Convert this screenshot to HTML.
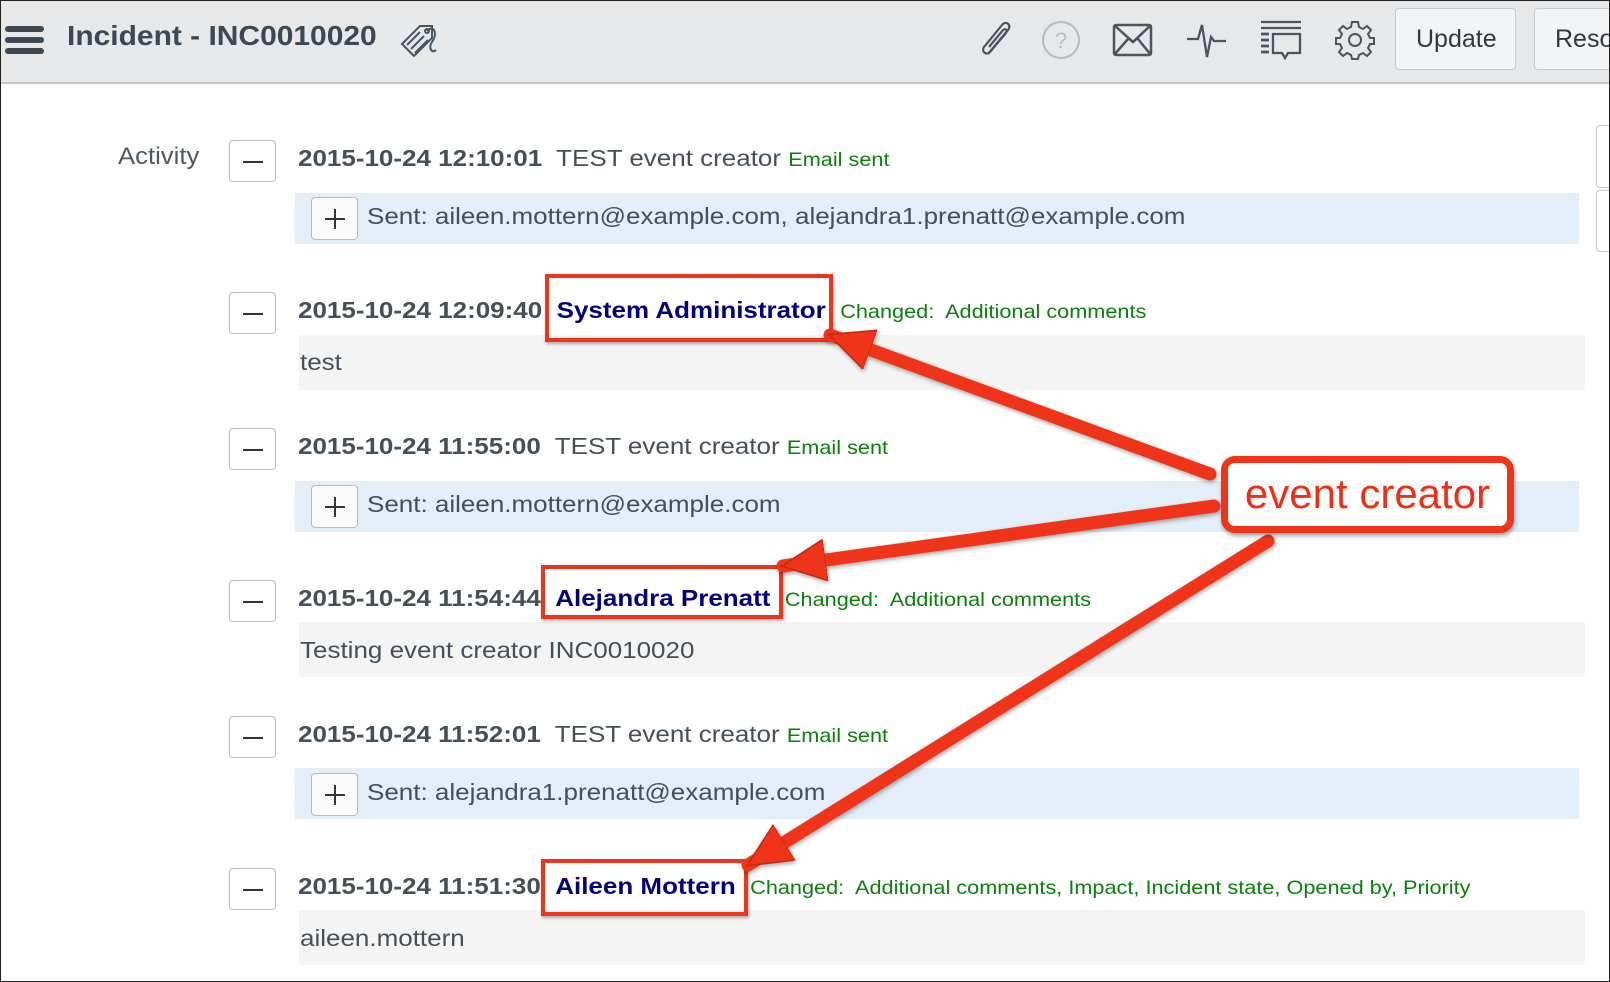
<!DOCTYPE html>
<html><head><meta charset="utf-8"><style>
*{margin:0;padding:0;box-sizing:border-box}
body{width:1610px;height:982px;position:relative;overflow:hidden;background:#fff;font-family:"Liberation Sans",Arial,sans-serif;color:#444f5a}
.frame{position:absolute;left:0;top:0;width:1610px;height:982px;border:1px solid #222;z-index:20;pointer-events:none}
.hdr{position:absolute;left:0;top:0;width:1610px;height:84px;background:#e6e8ea;border-bottom:2px solid #c4c7ca}
.title{position:absolute;left:67px;top:20px;font-size:28px;font-weight:bold;color:#3d4852;transform:scaleX(1.07);transform-origin:0 0}
.btn{position:absolute;top:8px;height:62px;background:#f3f4f5;border:1px solid #c6c9cc;border-radius:4px;font-size:25px;color:#2f3840;line-height:60px;padding-left:20px}
.abs{position:absolute}
.lbl{left:118px;top:143px;font-size:24px;color:#4f5963;transform:scaleX(1.07);transform-origin:0 0}
.mbtn{position:absolute;left:229px;width:47px;height:42px;border:1px solid #b8bcc0;border-radius:4px;background:#fff}
.mbtn:after{content:"";position:absolute;left:13px;top:20px;width:20px;height:2px;background:#333}
.pbtn{position:absolute;left:311px;width:47px;height:43px;border:1px solid #b8bcc0;border-radius:4px;background:#fbfbfb}
.pbtn:before{content:"";position:absolute;left:13px;top:20px;width:20px;height:2px;background:#333}
.pbtn:after{content:"";position:absolute;left:22px;top:11px;width:2px;height:20px;background:#333}
.row{position:absolute;left:298px;font-size:23px;white-space:nowrap;color:#444f5a;transform:scaleX(1.13);transform-origin:0 0}
.row b{color:#444f5a}
.g{color:#0a800a;font-size:19.2px}
.n{color:#00007a;font-weight:bold}
.blue{position:absolute;left:295px;width:1284px;height:51px;background:#e4eef9}
.grey{position:absolute;left:299px;width:1286px;height:55px;background:#f4f4f4}
.txt{position:absolute;font-size:23px;color:#444f5a;white-space:nowrap;transform:scaleX(1.13);transform-origin:0 0}
.rbox{position:absolute;border:4px solid #f0341a;box-shadow:1px 2px 3px rgba(0,0,0,.3)}
</style></head><body>
<div class="hdr">
  <div class="abs" style="left:5px;top:26px;width:39px;height:6px;background:#3d4852;border-radius:3px"></div>
  <div class="abs" style="left:5px;top:37px;width:39px;height:6px;background:#3d4852;border-radius:3px"></div>
  <div class="abs" style="left:5px;top:48px;width:39px;height:6px;background:#3d4852;border-radius:3px"></div>
  <div class="title">Incident - INC0010020</div>
  <svg class="abs" style="left:398px;top:20px" width="42" height="42" viewBox="0 0 42 42" fill="none" stroke="#4a555f" stroke-width="2"><path d="M4 24 L22 6 L34 6 L34 18 L16 36 Z"/><path d="M9 25 L22 12 M13 29 L26 16 M17 33 L30 20"/><circle cx="29" cy="11" r="2"/><path d="M29 11 C36 4 40 14 34 22 C30 28 34 34 38 30"/></svg>
  <svg class="abs" style="left:978px;top:20px" width="40" height="40" viewBox="0 0 40 40" fill="none" stroke="#4a555f" stroke-width="2.2"><path d="M10 34 L30 10 C34 5 28 0 24 5 L6 27 C3 31 8 36 12 32 L28 13 C30 10 27 8 25 10 L11 27"/></svg>
  <svg class="abs" style="left:1040px;top:19px" width="42" height="42" viewBox="0 0 42 42" fill="none" stroke="#b9bdc1" stroke-width="2.2"><circle cx="21" cy="21" r="18"/><text x="21" y="29" font-size="22" text-anchor="middle" fill="#b9bdc1" stroke="none" font-family="Liberation Sans">?</text></svg>
  <svg class="abs" style="left:1112px;top:22px" width="42" height="36" viewBox="0 0 42 36" fill="none" stroke="#4a555f" stroke-width="2.5"><rect x="2" y="3" width="37" height="30" rx="2"/><path d="M2 3 L21 20 L39 3 M2 33 L16 17 M39 33 L26 17"/></svg>
  <svg class="abs" style="left:1186px;top:17px" width="42" height="46" viewBox="0 0 42 46" fill="none" stroke="#4a555f" stroke-width="2.3"><path d="M1 22 L12 22 L16 8 L21 40 L25 20 L28 24 L40 24"/></svg>
  <svg class="abs" style="left:1260px;top:19px" width="42" height="42" viewBox="0 0 42 42" fill="none" stroke="#4a555f" stroke-width="2.3"><path d="M1 3 H41 M1 9 H41"/><path d="M1 15 H9 M1 21 H9 M1 27 H9 M1 33 H9" stroke-width="2.8"/><path d="M13 15 H40 V34 H28 L25 39 L22 34 H13 Z"/></svg>
  <svg class="abs" style="left:1334px;top:19px" width="42" height="42" viewBox="0 0 42 42" fill="none" stroke="#4a555f" stroke-width="2"><circle cx="21" cy="21" r="6"/><path d="M18 3 H24 L25 8 L29 10 L33 7 L37 11 L34 15 L36 19 L40 19 V25 L36 25 L34 29 L37 33 L33 37 L29 34 L25 36 L24 40 H18 L17 36 L13 34 L9 37 L5 33 L8 29 L6 25 L2 25 V19 L6 19 L8 15 L5 11 L9 7 L13 10 L17 8 Z"/></svg>
  <div class="btn" style="left:1395px;width:121px">Update</div>
  <div class="btn" style="left:1534px;width:100px">Resolve</div>
</div>

<div class="abs" style="left:1596px;top:125px;width:20px;height:63px;border:1px solid #c6c9cc;border-radius:4px"></div>
<div class="abs" style="left:1596px;top:190px;width:20px;height:62px;border:1px solid #c6c9cc;border-radius:4px"></div>

<div class="abs lbl">Activity</div>

<div class="mbtn" style="top:140px"></div>
<div class="row" style="top:145px"><b>2015-10-24 12:10:01</b>&nbsp; TEST event creator <span class="g">Email sent</span></div>
<div class="blue" style="top:193px"></div>
<div class="pbtn" style="top:197px"></div>
<div class="txt" style="left:367px;top:203px">Sent: aileen.mottern@example.com, alejandra1.prenatt@example.com</div>

<div class="mbtn" style="top:292px"></div>
<div class="row" style="top:297px"><b>2015-10-24 12:09:40</b>&nbsp; <span class="n">System Administrator</span>&nbsp; <span class="g">Changed:&nbsp; Additional comments</span></div>
<div class="grey" style="top:335px"></div>
<div class="txt" style="left:300px;top:349px">test</div>

<div class="mbtn" style="top:428px"></div>
<div class="row" style="top:433px"><b>2015-10-24 11:55:00</b>&nbsp; TEST event creator <span class="g">Email sent</span></div>
<div class="blue" style="top:481px"></div>
<div class="pbtn" style="top:485px"></div>
<div class="txt" style="left:367px;top:491px">Sent: aileen.mottern@example.com</div>

<div class="mbtn" style="top:580px"></div>
<div class="row" style="top:585px"><b>2015-10-24 11:54:44</b>&nbsp; <span class="n">Alejandra Prenatt</span>&nbsp; <span class="g">Changed:&nbsp; Additional comments</span></div>
<div class="grey" style="top:622px"></div>
<div class="txt" style="left:300px;top:637px">Testing event creator INC0010020</div>

<div class="mbtn" style="top:716px"></div>
<div class="row" style="top:721px"><b>2015-10-24 11:52:01</b>&nbsp; TEST event creator <span class="g">Email sent</span></div>
<div class="blue" style="top:768px"></div>
<div class="pbtn" style="top:773px"></div>
<div class="txt" style="left:367px;top:779px">Sent: alejandra1.prenatt@example.com</div>

<div class="mbtn" style="top:868px"></div>
<div class="row" style="top:873px"><b>2015-10-24 11:51:30</b>&nbsp; <span class="n">Aileen Mottern</span>&nbsp; <span class="g">Changed:&nbsp; Additional comments, Impact, Incident state, Opened by, Priority</span></div>
<div class="grey" style="top:910px"></div>
<div class="txt" style="left:300px;top:925px">aileen.mottern</div>

<div class="rbox" style="left:545px;top:274px;width:288px;height:68px"></div>
<div class="rbox" style="left:541px;top:565px;width:242px;height:54px"></div>
<div class="rbox" style="left:541px;top:859px;width:207px;height:57px"></div>

<svg class="abs" style="left:0;top:0;z-index:5" width="1610" height="982">
<defs><marker id="ah" markerWidth="4" markerHeight="4" refX="3.3" refY="1.6" orient="auto" markerUnits="strokeWidth"><path d="M0 0 L3.4 1.6 L0 3.2 Z" fill="#f0341a" stroke="#c42a10" stroke-width="0.12"/></marker></defs>
<g stroke="#f0341a" stroke-width="13" stroke-linecap="round" fill="none" style="filter:drop-shadow(1px 2px 2px rgba(0,0,0,.35))">
<line x1="1210" y1="474" x2="830" y2="335" marker-end="url(#ah)"/>
<line x1="1214" y1="506" x2="783" y2="566" marker-end="url(#ah)"/>
<line x1="1268" y1="541" x2="748" y2="865" marker-end="url(#ah)"/>
</g>
</svg>
<div class="abs" style="left:1221px;top:456px;width:293px;height:77px;border:7px solid #f0341a;border-radius:14px;background:#fff;z-index:6;box-shadow:1px 3px 4px rgba(0,0,0,.35);font-size:42px;color:#ee2f14;text-align:center;line-height:62px;white-space:nowrap">event creator</div>

<div class="frame"></div>
</body></html>
